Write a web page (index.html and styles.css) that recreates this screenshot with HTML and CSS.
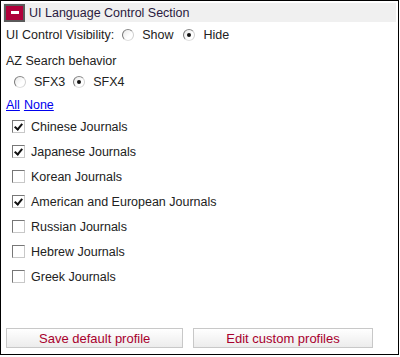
FILE: index.html
```html
<!DOCTYPE html>
<html lang="en">
<head>
    <meta charset="UTF-8">
    <title>UI Language Control Section</title>
    <link rel="stylesheet" href="styles.css">
</head>
<body>
    <div class="panel">
        <div class="section-header">
            <span class="toggle-icon"></span>
            <span class="section-title">UI Language Control Section</span>
        </div>
        <div class="row visibility-row">
            <span class="row-label">UI Control Visibility:</span>
            <label class="choice"><input type="radio" name="visibility" value="show"> Show</label>
            <label class="choice"><input type="radio" name="visibility" value="hide" checked> Hide</label>
        </div>
        <div class="row az-label">AZ Search behavior</div>
        <div class="row sfx-row">
            <label class="choice"><input type="radio" name="sfx" value="sfx3"> SFX3</label>
            <label class="choice"><input type="radio" name="sfx" value="sfx4" checked> SFX4</label>
        </div>
        <div class="row links-row">
            <a href="#">All</a> <a href="#">None</a>
        </div>
        <ul class="journal-list">
            <li><label><input type="checkbox" checked> Chinese Journals</label></li>
            <li><label><input type="checkbox" checked> Japanese Journals</label></li>
            <li><label><input type="checkbox"> Korean Journals</label></li>
            <li><label><input type="checkbox" checked> American and European Journals</label></li>
            <li><label><input type="checkbox"> Russian Journals</label></li>
            <li><label><input type="checkbox"> Hebrew Journals</label></li>
            <li><label><input type="checkbox"> Greek Journals</label></li>
        </ul>
        <div class="actions">
            <button class="btn">Save default profile</button>
            <button class="btn">Edit custom profiles</button>
        </div>
    </div>
</body>
</html>
```

FILE: styles.css
```css
body {
    margin: 0;
    padding: 0;
    background: #fff;
}
.panel {
    width: 399px;
    height: 355px;
    box-sizing: border-box;
    border: 1px solid #000;
    display: flex;
    flex-direction: column;
    font-family: "Liberation Sans", Arial, sans-serif;
    font-size: 12.5px;
    color: #222;
}
.section-header {
    margin: 2px 2px 0;
    height: 19px;
    background: #f0f0f0;
    display: flex;
    align-items: center;
}
.toggle-icon {
    width: 17px;
    height: 14px;
    margin-left: 1px;
    border: 2px solid #5a5a5a;
    background: #b0003a;
    display: flex;
    align-items: center;
    justify-content: center;
}
.toggle-icon::after {
    content: "";
    width: 8px;
    height: 3px;
    background: #fff;
}
.section-title {
    margin-left: 4px;
    color: #2a1a40;
}
.row {
    height: 20px;
    display: flex;
    align-items: center;
    padding-left: 5px;
}
.visibility-row {
    margin-top: 3px;
}
.row-label {
    margin-right: 8px;
}
.choice {
    display: flex;
    align-items: center;
    margin-right: 10px;
}
.az-label {
    margin-top: 6px;
}
.sfx-row {
    margin-top: 1px;
    padding-left: 13px;
}
.sfx-row .choice {
    margin-right: 8px;
}
.links-row {
    margin-top: 3px;
    gap: 4px;
}
.links-row a {
    color: #0000ee;
}
input[type="radio"] {
    appearance: none;
    width: 12px;
    height: 12px;
    margin: 0 8px 0 0;
    border: 1px solid;
    border-color: #888 #d0d0d0 #e0e0e0 #777;
    border-radius: 50%;
    background: linear-gradient(135deg, #e8e8e8, #fff 60%);
    box-sizing: border-box;
    display: flex;
    align-items: center;
    justify-content: center;
}
input[type="radio"]:checked::after {
    content: "";
    width: 4px;
    height: 4px;
    border-radius: 50%;
    background: #111;
}
.journal-list {
    list-style: none;
    margin: -1px 0 0;
    padding: 0 0 0 11px;
}
.journal-list li {
    height: 25px;
    display: flex;
    align-items: center;
}
.journal-list label {
    display: flex;
    align-items: center;
}
input[type="checkbox"] {
    appearance: none;
    width: 13px;
    height: 13px;
    margin: 0 6px 0 0;
    box-sizing: border-box;
    border: 1px solid;
    border-color: #777 #c8c8c8 #c8c8c8 #777;
    background: #fff;
    position: relative;
}
input[type="checkbox"]:checked::after {
    content: "";
    position: absolute;
    left: 3px;
    top: 1px;
    width: 3px;
    height: 6px;
    border: solid #111;
    border-width: 0 2px 2px 0;
    transform: rotate(40deg);
}
.actions {
    margin-top: auto;
    margin-bottom: 6px;
    padding-left: 5px;
    display: flex;
    gap: 10px;
}
.btn {
    height: 20px;
    padding: 0 32px;
    border: 1px solid #c8c8c8;
    background: linear-gradient(#fff, #ececec);
    color: #a8002d;
    font-family: "Liberation Sans", Arial, sans-serif;
    font-size: 13px;
    cursor: pointer;
}
```
